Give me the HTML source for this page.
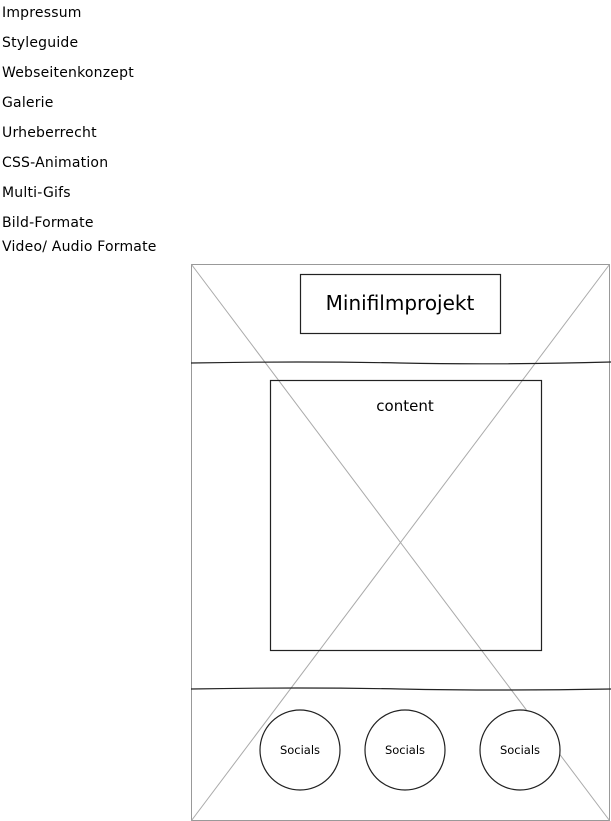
<!DOCTYPE html>
<html><head><meta charset="utf-8"><style>
html,body{margin:0;padding:0;background:#fff;width:611px;height:821px;overflow:hidden}
.n{position:absolute;left:2px;font-family:"DejaVu Sans","Liberation Sans",sans-serif;font-size:14px;color:#000;line-height:16px;letter-spacing:0.2px}
svg{position:absolute;left:0;top:0}
</style></head><body>
<div class="n" style="top:5px">Impressum</div>
<div class="n" style="top:35px">Styleguide</div>
<div class="n" style="top:65px">Webseitenkonzept</div>
<div class="n" style="top:95px">Galerie</div>
<div class="n" style="top:125px">Urheberrecht</div>
<div class="n" style="top:155px">CSS-Animation</div>
<div class="n" style="top:185px">Multi-Gifs</div>
<div class="n" style="top:215px">Bild-Formate</div>
<div class="n" style="top:239px">Video/ Audio Formate</div>
<svg width="611" height="821">
<rect x="191.5" y="264.5" width="418" height="556" fill="none" stroke="#999"/>
<line x1="191.5" y1="264.5" x2="609.5" y2="820.5" stroke="#aaa"/>
<line x1="609.5" y1="264.5" x2="191.5" y2="820.5" stroke="#aaa"/>
<path d="M191 363 Q300 361 400 363 T611 362" fill="none" stroke="#222" stroke-width="1.2"/>
<path d="M191 689 Q300 687 400 689 T611 689" fill="none" stroke="#222" stroke-width="1.2"/>
<rect x="300.5" y="274.5" width="200" height="59" fill="#fff" stroke="#222" stroke-width="1.2"/>
<rect x="270.5" y="380.5" width="271" height="270" fill="none" stroke="#222" stroke-width="1.2"/>
<circle cx="300" cy="750" r="40" fill="#fff" stroke="#222" stroke-width="1.2"/>
<circle cx="405" cy="750" r="40" fill="#fff" stroke="#222" stroke-width="1.2"/>
<circle cx="520" cy="750" r="40" fill="#fff" stroke="#222" stroke-width="1.2"/>
<g font-family="DejaVu Sans, Liberation Sans, sans-serif" text-anchor="middle" fill="#000">
<text x="400" y="310" font-size="20">Minifilmprojekt</text>
<text x="405" y="411" font-size="15">content</text>
<text x="300" y="754" font-size="11.5">Socials</text>
<text x="405" y="754" font-size="11.5">Socials</text>
<text x="520" y="754" font-size="11.5">Socials</text>
</g>
</svg>
</body></html>
